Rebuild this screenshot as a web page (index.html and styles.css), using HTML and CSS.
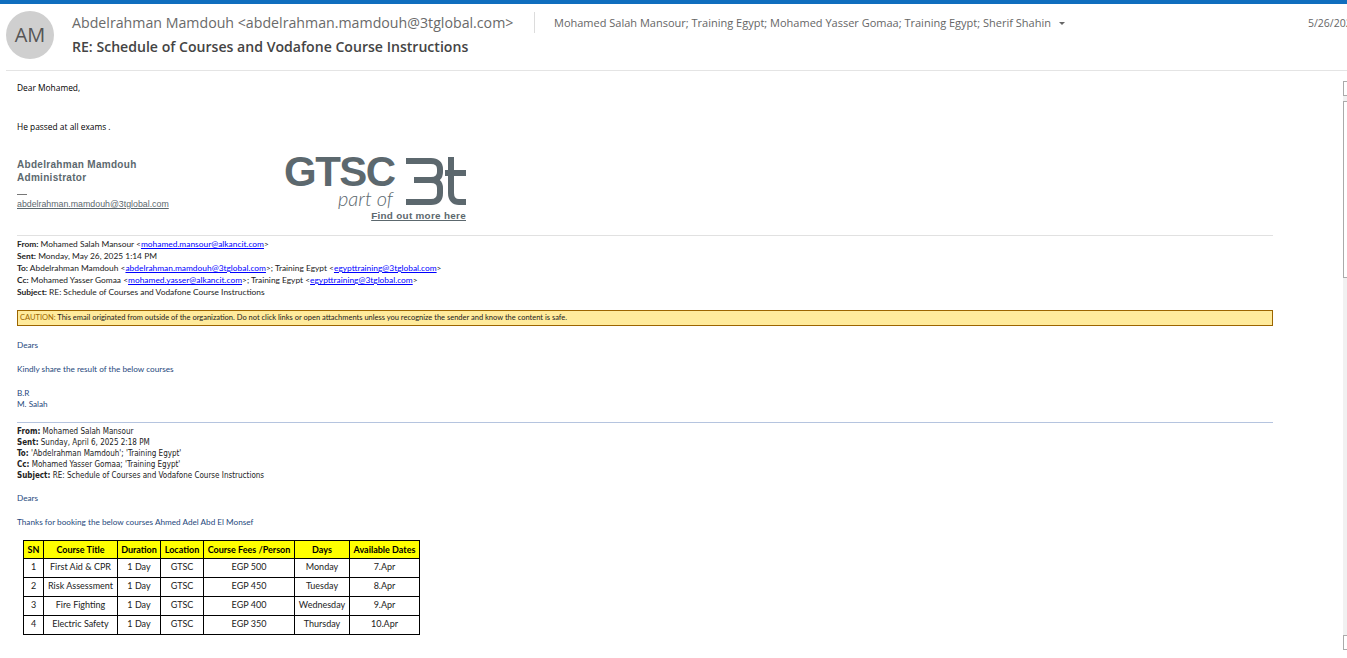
FILE: index.html
```html
<!DOCTYPE html>
<html lang="en">
	<head>
		<meta charset="UTF-8" />
		<meta name="viewport" content="width=device-width, initial-scale=1.0" />

		<link rel="stylesheet" href="styles.css">

		<title>RE: Schedule of Courses and Vodafone Course Instructions</title>
	</head>
	<body>
		<header id="header">
			<div class="avatar">AM</div>
			<div class="titles">
				<div class="sender">Abdelrahman Mamdouh &lt;abdelrahman.mamdouh@3tglobal.com&gt;</div>
				<div class="subject">RE: Schedule of Courses and Vodafone Course Instructions</div>
			</div>
			<div class="recipients">
				<span>Mohamed Salah Mansour; Training Egypt; Mohamed Yasser Gomaa; Training Egypt; Sherif Shahin</span>
				<span class="caret"></span>
			</div>
			<div class="date">5/26/2025</div>
		</header>

		<div id="content">
			<main id="mail">
				<p class="line black">Dear Mohamed,</p>
				<p class="line black passed">He passed at all exams .</p>

				<div class="signature">
					<div class="sig-left">
						<div class="sig-name">Abdelrahman Mamdouh</div>
						<div class="sig-name">Administrator</div>
						<div class="sig-rule"></div>
						<a class="sig-mail">abdelrahman.mamdouh@3tglobal.com</a>
					</div>
					<div class="sig-logo">
						<div class="logo-row">
							<div class="logo-words">
								<div class="logo-gtsc">GTSC</div>
								<div class="logo-part">part of</div>
							</div>
							<svg class="logo-mark" width="60" height="50" viewBox="0 0 60 50" fill="none" stroke="#5c686e" stroke-width="6">
								<path d="M0 6H25C31 6 34 9 34 14V17C34 22 31 25 25 25H8M25 25C31 25 34 28 34 33V38C34 44 31 47 25 47H0" />
								<path d="M45 2V38C45 44 48 47 53 47H60M39 18H60" />
							</svg>
						</div>
						<a class="logo-link">Find out more here</a>
					</div>
				</div>

				<div class="quote-head grey-rule">
					<div><b>From:</b> Mohamed Salah Mansour &lt;<a>mohamed.mansour@alkancit.com</a>&gt;</div>
					<div><b>Sent:</b> Monday, May 26, 2025 1:14 PM</div>
					<div><b>To:</b> Abdelrahman Mamdouh &lt;<a>abdelrahman.mamdouh@3tglobal.com</a>&gt;; Training Egypt &lt;<a>egypttraining@3tglobal.com</a>&gt;</div>
					<div><b>Cc:</b> Mohamed Yasser Gomaa &lt;<a>mohamed.yasser@alkancit.com</a>&gt;; Training Egypt &lt;<a>egypttraining@3tglobal.com</a>&gt;</div>
					<div><b>Subject:</b> RE: Schedule of Courses and Vodafone Course Instructions</div>
				</div>

				<div class="caution"><span>CAUTION:</span> This email originated from outside of the organization. Do not click links or open attachments unless you recognize the sender and know the content is safe.</div>

				<p class="line blue dears">Dears</p>
				<p class="line blue gap-12">Kindly share the result of the below courses</p>
				<p class="line blue gap-12">B.R</p>
				<p class="line blue tight">M. Salah</p>

				<div class="quote-head blue-rule">
					<div><b>From:</b> Mohamed Salah Mansour</div>
					<div><b>Sent:</b> Sunday, April 6, 2025 2:18 PM</div>
					<div><b>To:</b> 'Abdelrahman Mamdouh'; 'Training Egypt'</div>
					<div><b>Cc:</b> Mohamed Yasser Gomaa; 'Training Egypt'</div>
					<div><b>Subject:</b> RE: Schedule of Courses and Vodafone Course Instructions</div>
				</div>

				<p class="line blue gap-11">Dears</p>
				<p class="line blue gap-12">Thanks for booking the below courses Ahmed Adel Abd El Monsef</p>

				<table id="courses">
					<thead>
						<tr>
							<th class="c-sn">SN</th>
							<th class="c-title">Course Title</th>
							<th class="c-dur">Duration</th>
							<th class="c-loc">Location</th>
							<th class="c-fees">Course Fees /Person</th>
							<th class="c-days">Days</th>
							<th class="c-dates">Available Dates</th>
						</tr>
					</thead>
					<tbody>
						<tr><td>1</td><td>First Aid &amp; CPR</td><td>1 Day</td><td>GTSC</td><td>EGP 500</td><td>Monday</td><td>7.Apr</td></tr>
						<tr><td>2</td><td>Risk Assessment</td><td>1 Day</td><td>GTSC</td><td>EGP 450</td><td>Tuesday</td><td>8.Apr</td></tr>
						<tr><td>3</td><td>Fire Fighting</td><td>1 Day</td><td>GTSC</td><td>EGP 400</td><td>Wednesday</td><td>9.Apr</td></tr>
						<tr><td>4</td><td>Electric Safety</td><td>1 Day</td><td>GTSC</td><td>EGP 350</td><td>Thursday</td><td>10.Apr</td></tr>
					</tbody>
				</table>
			</main>

			<aside id="scroll">
				<div class="scroll-btn"></div>
				<div class="scroll-gutter">
					<div class="scroll-thumb"></div>
				</div>
				<div class="scroll-btn"></div>
			</aside>
		</div>
	</body>
</html>
```

FILE: styles.css
```css
html,
body {
	height: 100%;
}

body {
	margin: 0;
	overflow: hidden;
	background-color: white;
	border-top: 4px solid #106ebe;
	box-sizing: border-box;
	font-family: "Open Sans", sans-serif;
}

p {
	margin: 0;
}

#header {
	height: 66px;
	margin-left: 6px;
	display: flex;
	border-bottom: 1px solid #e4e4e4;
	white-space: nowrap;
	overflow: hidden;
}

.avatar {
	flex: none;
	width: 48px;
	height: 48px;
	margin-top: 7px;
	border-radius: 50%;
	background-color: #cfcfcf;
	color: #555;
	font-size: 20px;
	line-height: 48px;
	text-align: center;
}

.titles {
	flex: none;
	width: 462px;
	margin-left: 18px;
	padding-top: 8px;
}

.sender {
	font-size: 14.2px;
	line-height: 21px;
	color: #6a6a6a;
}

.subject {
	margin-top: 4px;
	font-size: 14.1px;
	line-height: 20px;
	font-weight: 600;
	color: #444;
}

.recipients {
	flex: none;
	width: 774px;
	height: 21px;
	margin-top: 8px;
	padding-left: 19px;
	border-left: 1px solid #dcdcdc;
	box-sizing: border-box;
	display: flex;
	align-items: center;
	gap: 8px;
	font-size: 11px;
	color: #666;
}

.caret {
	width: 0;
	height: 0;
	margin-top: 2px;
	border: 3px solid transparent;
	border-top: 3px solid #666;
	border-bottom: none;
}

.date {
	margin-top: 9px;
	font-size: 10.5px;
	line-height: 20px;
	color: #666;
}

#content {
	display: flex;
	height: 588px;
}

#mail {
	flex: none;
	width: 1256px;
	padding: 11px 0 0 17px;
	font-size: 8.4px;
	line-height: 12px;
	color: #222;
}

.black {
	color: black;
}

.blue {
	font-family: "Lato", sans-serif;
	font-size: 8.2px;
	color: #1f497d;
}

.tight {
	line-height: 11px;
}

.passed {
	margin-top: 27px;
}

.signature {
	display: flex;
	margin-top: 22px;
	font-family: "Liberation Sans", sans-serif;
	color: #5c686e;
}

.sig-left {
	flex: none;
	width: 267px;
	padding-top: 3px;
}

.sig-name {
	font-size: 10px;
	line-height: 13px;
	font-weight: bold;
	letter-spacing: 0.3px;
}

.sig-rule {
	width: 10px;
	height: 1px;
	margin-top: 10px;
	background-color: #777;
}

.sig-mail {
	display: block;
	margin-top: 2px;
	font-size: 8.8px;
	line-height: 14px;
	text-decoration: underline;
}

.sig-logo {
	flex: none;
	width: 182px;
}

.logo-row {
	display: flex;
	justify-content: space-between;
}

.logo-words {
	width: 111px;
}

.logo-gtsc {
	font-size: 42px;
	line-height: 33px;
	font-weight: bold;
	letter-spacing: -1.5px;
}

.logo-part {
	font-family: "Lato", sans-serif;
	font-size: 20px;
	line-height: 20px;
	font-weight: 300;
	font-style: italic;
	text-align: right;
	padding-right: 2px;
}

.logo-link {
	display: block;
	margin-top: 1px;
	font-size: 9.9px;
	line-height: 14px;
	font-weight: bold;
	letter-spacing: 0.3px;
	text-align: right;
	text-decoration: underline;
}

.quote-head a {
	color: #00f;
	text-decoration: underline;
}

.grey-rule {
	margin-top: 12px;
	padding-top: 2px;
	border-top: 1px solid #e1e1e1;
	font-family: "Lato", sans-serif;
	font-size: 8.4px;
}

.blue-rule {
	margin-top: 12px;
	padding-top: 3px;
	border-top: 1px solid #b5c4df;
	font-family: "DejaVu Sans", sans-serif;
	font-stretch: condensed;
	font-size: 8px;
	line-height: 11px;
}

.caution {
	height: 14px;
	margin-top: 12px;
	padding-left: 2px;
	border: 1px solid #9c6500;
	background-color: #ffeb9c;
	font-family: "Lato", sans-serif;
	font-size: 7.5px;
	line-height: 14px;
	color: #222;
}

.caution span {
	color: #9c6500;
}

.dears {
	margin-top: 13px;
}

.gap-12 {
	margin-top: 12px;
}

.gap-11 {
	margin-top: 11px;
}

#courses {
	margin: 12px 0 0 6px;
	border-collapse: collapse;
	table-layout: fixed;
	width: 397px;
	text-align: center;
	font-family: "Lato", sans-serif;
	font-size: 9px;
	color: #222;
}

#courses th,
#courses td {
	padding: 0;
	border: 1px solid black;
	white-space: nowrap;
}

#courses th {
	height: 17px;
	background-color: yellow;
	color: black;
	font-weight: 700;
}

#courses td {
	height: 15px;
	padding-bottom: 3px;
}

.c-sn {
	width: 19px;
}

.c-title {
	width: 73px;
}

.c-dur {
	width: 42px;
}

.c-loc {
	width: 42px;
}

.c-fees {
	width: 90px;
}

.c-days {
	width: 54px;
}

.c-dates {
	width: 69px;
}

#scroll {
	margin: 10px 0 0 70px;
	flex: none;
	width: 4px;
	display: flex;
	flex-direction: column;
}

.scroll-btn {
	height: 15px;
	flex: none;
	border: 1px solid #aaa;
	border-right: none;
	box-sizing: border-box;
}

.scroll-gutter {
	flex: none;
	height: 539px;
	padding-top: 5px;
	box-sizing: border-box;
	background-color: #f1f1f1;
}

.scroll-thumb {
	height: 177px;
	border: 1px solid #aaa;
	border-right: none;
	box-sizing: border-box;
	background-color: white;
}
```
